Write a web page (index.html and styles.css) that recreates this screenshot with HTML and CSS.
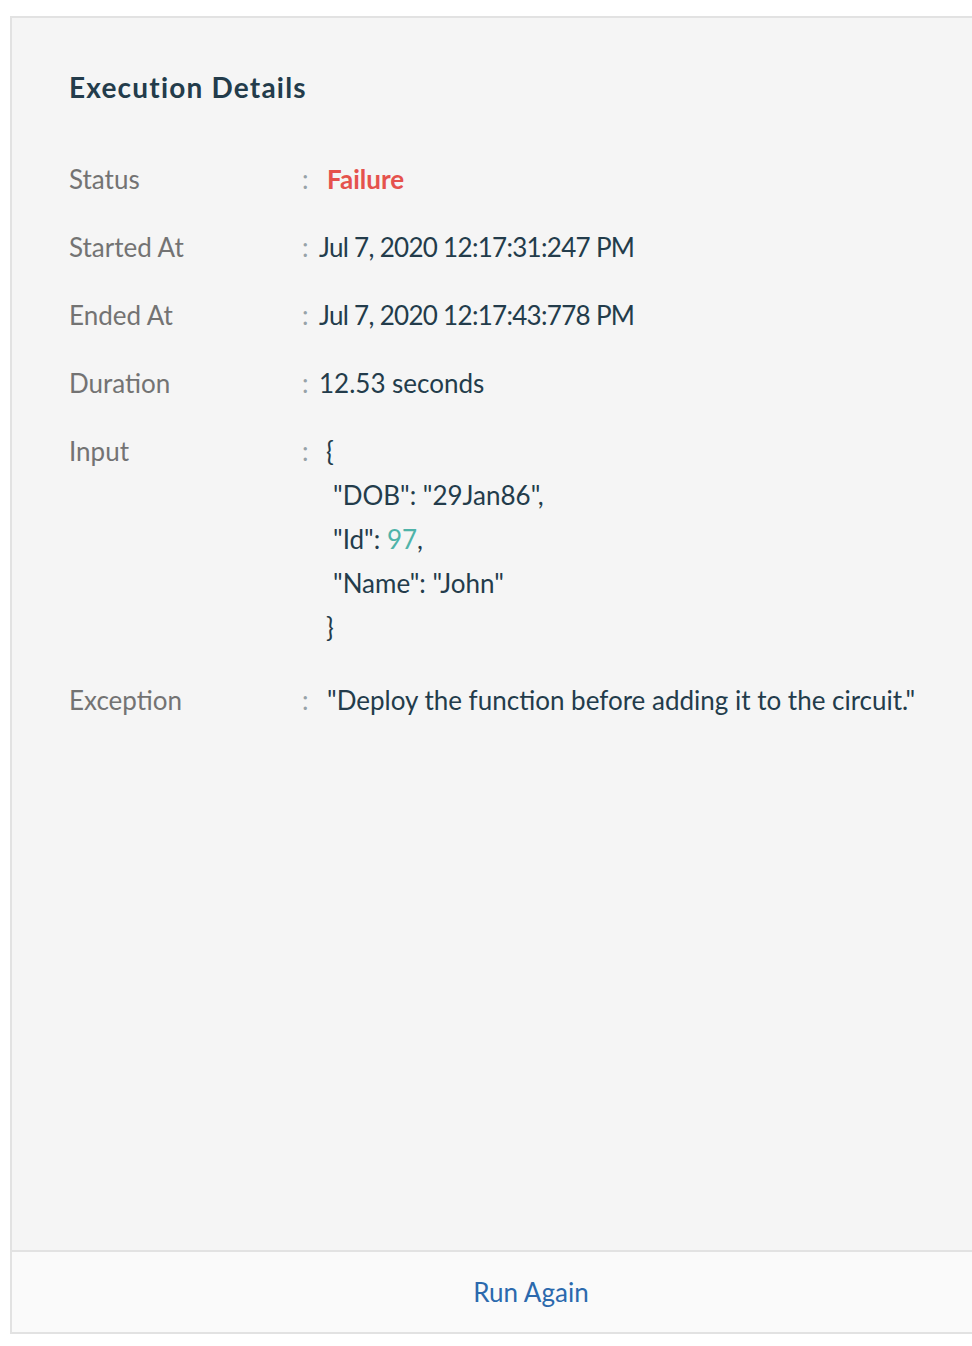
FILE: index.html
```html
<!DOCTYPE html>
<html>
<head>
<meta charset="utf-8">
<link rel="stylesheet" href="styles.css">
</head>
<body>
<div class="frame">
  <div class="panel">
    <h2 class="title">Execution Details</h2>
    <div class="rows">
      <div class="row">
        <div class="label">Status</div><div class="colon">:</div>
        <div class="value failure">Failure</div>
      </div>
      <div class="row">
        <div class="label">Started At</div><div class="colon">:</div>
        <div class="value date">Jul 7, 2020 12:17:31:247 PM</div>
      </div>
      <div class="row">
        <div class="label">Ended At</div><div class="colon">:</div>
        <div class="value date">Jul 7, 2020 12:17:43:778 PM</div>
      </div>
      <div class="row">
        <div class="label">Duration</div><div class="colon">:</div>
        <div class="value">12.53 seconds</div>
      </div>
      <div class="row">
        <div class="label">Input</div><div class="colon">:</div>
        <div class="value json">
          <div class="brace">{</div>
          <div class="jline">"DOB": "29Jan86",</div>
          <div class="jline">"Id": <span class="num">97</span>,</div>
          <div class="jline">"Name": "John"</div>
          <div class="brace">}</div>
        </div>
      </div>
      <div class="row">
        <div class="label">Exception</div><div class="colon">:</div>
        <div class="value exc">"Deploy the function before adding it to the circuit."</div>
      </div>
    </div>
  </div>
  <div class="footer"><span class="run">Run Again</span></div>
</div>
</body>
</html>
```
FILE: styles.css
```css
html, body {
  margin: 0;
  padding: 0;
  background: #ffffff;
  font-family: Lato, "Open Sans", sans-serif;
}
.frame {
  margin-top: 16px;
  margin-left: 10px;
  height: 1318px;
  border-top: 2px solid #e2e2e2;
  border-left: 2px solid #e2e2e2;
  display: flex;
  flex-direction: column;
  box-sizing: border-box;
}
.panel {
  flex: 1;
  background: #f5f5f5;
  padding: 54px 0 0 57px;
}
.title {
  margin: 0;
  font-size: 28px;
  font-weight: 700;
  letter-spacing: 1.2px;
  color: #233c4b;
  line-height: 30px;
}
.rows {
  margin-top: 60px;
  display: flex;
  flex-direction: column;
  gap: 34px;
}
.row {
  display: grid;
  grid-template-columns: 231px 19px 1fr;
  font-size: 26px;
  line-height: 34px;
}
.label {
  color: #737373;
}
.colon {
  color: #97a2a8;
  padding-left: 2px;
}
.value {
  color: #233c4b;
}
.date {
  letter-spacing: -0.7px;
}
.failure {
  color: #e5524d;
  font-weight: 700;
  padding-left: 8px;
}
.json {
  padding-left: 7px;
}
.jline {
  padding-left: 7px;
  line-height: 44px;
}
.brace {
  line-height: 44px;
}
.json .brace:first-child {
  line-height: 34px;
  margin-bottom: 5px;
}
.num {
  color: #4fb3a9;
}
.exc {
  padding-left: 8px;
}
.footer {
  height: 80px;
  border-top: 2px solid #e2e2e2;
  border-bottom: 2px solid #e2e2e2;
  background: #fafafa;
  display: flex;
  align-items: center;
  justify-content: center;
  padding-left: 78px;
}
.run {
  color: #2b69ad;
  font-size: 26px;
}
```
